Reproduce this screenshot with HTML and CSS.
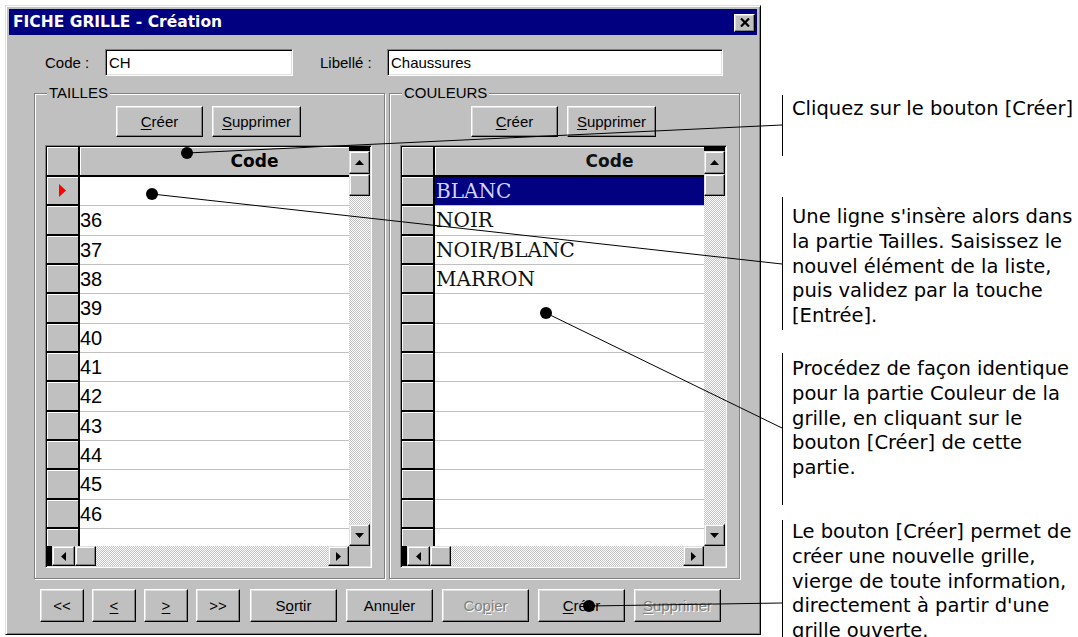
FILE: index.html
```html
<!DOCTYPE html>
<html lang="fr">
<head>
<meta charset="utf-8">
<title>Fiche grille - Création</title>
<link rel="stylesheet" href="styles.css">
</head>
<body>
<div class="page">
  <div class="window">
    <div class="titlebar">
      <span class="title">FICHE GRILLE - Création</span>
      <span class="close"><svg width="10" height="9" viewBox="0 0 10 9"><path d="M1 0.5L9 8.5M9 0.5L1 8.5" stroke="#000" stroke-width="2.2"/></svg></span>
    </div>
    <div class="content">
      <div class="fields">
        <span class="lbl lbl-code">Code :</span>
        <div class="field field-code">CH</div>
        <span class="lbl lbl-lib">Libellé :</span>
        <div class="field field-lib">Chaussures</div>
      </div>
      <div class="groups">
        <fieldset class="group">
          <legend>TAILLES</legend>
          <div class="group-btns">
            <div class="btn btn-a"><u>C</u>réer</div>
            <div class="btn btn-b"><u>S</u>upprimer</div>
          </div>
          <div class="grid">
            <div class="table sizes">
              <div class="row head"><div class="sel"></div><div class="cell">Code</div></div>
              <div class="row"><div class="sel"><svg width="7" height="13" viewBox="0 0 7 13"><polygon points="0,0 7,6.5 0,13" fill="#f00"/></svg></div><div class="cell"></div></div>
              <div class="row"><div class="sel"></div><div class="cell">36</div></div>
              <div class="row"><div class="sel"></div><div class="cell">37</div></div>
              <div class="row"><div class="sel"></div><div class="cell">38</div></div>
              <div class="row"><div class="sel"></div><div class="cell">39</div></div>
              <div class="row"><div class="sel"></div><div class="cell">40</div></div>
              <div class="row"><div class="sel"></div><div class="cell">41</div></div>
              <div class="row"><div class="sel"></div><div class="cell">42</div></div>
              <div class="row"><div class="sel"></div><div class="cell">43</div></div>
              <div class="row"><div class="sel"></div><div class="cell">44</div></div>
              <div class="row"><div class="sel"></div><div class="cell">45</div></div>
              <div class="row"><div class="sel"></div><div class="cell">46</div></div>
              <div class="row"><div class="sel"></div><div class="cell"></div></div>
            </div>
            <div class="vscroll">
              <div class="vbar-cap"></div>
              <div class="sb sb-up"><svg width="9" height="5" viewBox="0 0 9 5"><polygon points="0,5 4.5,0 9,5"/></svg></div>
              <div class="sb vthumb"></div>
              <div class="track"></div>
              <div class="sb sb-down"><svg width="9" height="5" viewBox="0 0 9 5"><polygon points="0,0 9,0 4.5,5"/></svg></div>
            </div>
            <div class="hscroll">
              <div class="hbar-cap"></div>
              <div class="sb sb-left"><svg width="5" height="9" viewBox="0 0 5 9"><polygon points="5,0 5,9 0,4.5"/></svg></div>
              <div class="sb hthumb"></div>
              <div class="track"></div>
              <div class="sb sb-right"><svg width="5" height="9" viewBox="0 0 5 9"><polygon points="0,0 5,4.5 0,9"/></svg></div>
            </div>
            <div class="corner"></div>
          </div>
        </fieldset>
        <fieldset class="group">
          <legend>COULEURS</legend>
          <div class="group-btns">
            <div class="btn btn-a"><u>C</u>réer</div>
            <div class="btn btn-b"><u>S</u>upprimer</div>
          </div>
          <div class="grid">
            <div class="table colors">
              <div class="row head"><div class="sel"></div><div class="cell">Code</div></div>
              <div class="row"><div class="sel"></div><div class="cell selected">BLANC</div></div>
              <div class="row"><div class="sel"></div><div class="cell">NOIR</div></div>
              <div class="row"><div class="sel"></div><div class="cell">NOIR/BLANC</div></div>
              <div class="row"><div class="sel"></div><div class="cell">MARRON</div></div>
              <div class="row"><div class="sel"></div><div class="cell"></div></div>
              <div class="row"><div class="sel"></div><div class="cell"></div></div>
              <div class="row"><div class="sel"></div><div class="cell"></div></div>
              <div class="row"><div class="sel"></div><div class="cell"></div></div>
              <div class="row"><div class="sel"></div><div class="cell"></div></div>
              <div class="row"><div class="sel"></div><div class="cell"></div></div>
              <div class="row"><div class="sel"></div><div class="cell"></div></div>
              <div class="row"><div class="sel"></div><div class="cell"></div></div>
              <div class="row"><div class="sel"></div><div class="cell"></div></div>
            </div>
            <div class="vscroll">
              <div class="vbar-cap"></div>
              <div class="sb sb-up"><svg width="9" height="5" viewBox="0 0 9 5"><polygon points="0,5 4.5,0 9,5"/></svg></div>
              <div class="sb vthumb"></div>
              <div class="track"></div>
              <div class="sb sb-down"><svg width="9" height="5" viewBox="0 0 9 5"><polygon points="0,0 9,0 4.5,5"/></svg></div>
            </div>
            <div class="hscroll">
              <div class="hbar-cap"></div>
              <div class="sb sb-left"><svg width="5" height="9" viewBox="0 0 5 9"><polygon points="5,0 5,9 0,4.5"/></svg></div>
              <div class="sb hthumb"></div>
              <div class="track"></div>
              <div class="sb sb-right"><svg width="5" height="9" viewBox="0 0 5 9"><polygon points="0,0 5,4.5 0,9"/></svg></div>
            </div>
            <div class="corner"></div>
          </div>
        </fieldset>
      </div>
      <div class="actions">
        <div class="btn btn-s">&lt;&lt;</div>
        <div class="btn btn-s"><u>&lt;</u></div>
        <div class="btn btn-s"><u>&gt;</u></div>
        <div class="btn btn-s">&gt;&gt;</div>
        <div class="btn btn-l btn-first">S<u>o</u>rtir</div>
        <div class="btn btn-l">Ann<u>u</u>ler</div>
        <div class="btn btn-l disabled">Co<u>p</u>ier</div>
        <div class="btn btn-l"><u>C</u>réer</div>
        <div class="btn btn-l disabled"><u>S</u>upprimer</div>
      </div>
    </div>
  </div>
  <div class="notes">
    <div class="note note-1">Cliquez sur le bouton [Créer]</div>
    <div class="note note-2">Une ligne s'insère alors dans<br>la partie Tailles. Saisissez le<br>nouvel élément de la liste,<br>puis validez par la touche<br>[Entrée].</div>
    <div class="note note-3">Procédez de façon identique<br>pour la partie Couleur de la<br>grille, en cliquant sur le<br>bouton [Créer] de cette<br>partie.</div>
    <div class="note note-4">Le bouton [Créer] permet de<br>créer une nouvelle grille,<br>vierge de toute information,<br>directement à partir d'une<br>grille ouverte.</div>
  </div>
</div>
<svg class="leaders" width="1078" height="637" viewBox="0 0 1078 637">
  <g stroke="#000" stroke-width="1" fill="none">
    <line x1="187" y1="153" x2="782" y2="125"/>
    <line x1="152" y1="194" x2="782" y2="264"/>
    <line x1="546" y1="313" x2="782" y2="428"/>
    <line x1="589" y1="606" x2="782" y2="603"/>
  </g>
  <g fill="#000">
    <circle cx="187" cy="153" r="6"/>
    <circle cx="152" cy="194" r="6"/>
    <circle cx="546" cy="313" r="6"/>
    <circle cx="589" cy="606" r="6"/>
  </g>
</svg>
</body>
</html>
```

FILE: styles.css
```css
* { box-sizing: border-box; }

html, body {
  margin: 0;
  padding: 0;
  background: #fff;
}

body {
  width: 1078px;
  height: 637px;
  overflow: hidden;
  position: relative;
  font-family: "Liberation Sans", Arial, sans-serif;
  font-size: 15px;
  color: #000;
}

.page {
  display: flex;
  align-items: flex-start;
}

/* ---------- window ---------- */
.window {
  margin: 5px 0 0 5px;
  width: 756px;
  height: 630px;
  flex: none;
  background: #c0c0c0;
  border: 1px solid;
  border-color: #dfdfdf #000 #000 #dfdfdf;
  box-shadow: inset 1px 1px #fff, inset -1px -1px #808080;
  padding: 3px;
  display: flex;
  flex-direction: column;
}

.titlebar {
  height: 26px;
  flex: none;
  background: #000080;
  display: flex;
  align-items: center;
  justify-content: space-between;
  padding: 0 2px 0 4px;
}

.title {
  color: #fff;
  font-family: "DejaVu Sans", Verdana, sans-serif;
  font-weight: bold;
  font-size: 15.5px;
  line-height: 26px;
  white-space: nowrap;
}

.close {
  width: 21px;
  height: 18px;
  margin-top: 1px;
  background: #c0c0c0;
  border: 1px solid;
  border-color: #fff #000 #000 #fff;
  box-shadow: inset -1px -1px #808080, inset 1px 1px #dfdfdf;
  display: flex;
  align-items: center;
  justify-content: center;
}

.content {
  display: flex;
  flex-direction: column;
}

/* ---------- code / libellé ---------- */
.fields {
  display: flex;
  align-items: center;
  height: 27px;
  margin-top: 14px;
  padding-left: 36px;
}

.lbl { white-space: nowrap; }
.lbl-code { width: 60px; }
.lbl-lib { width: 67px; margin-left: 27px; }

.field {
  height: 27px;
  background: #fff;
  border: 1px solid;
  border-color: #808080 #fff #fff #808080;
  box-shadow: inset 1px 1px #000, inset -1px -1px #dfdfdf;
  padding-left: 3px;
  line-height: 25px;
  white-space: nowrap;
}
.field-code { width: 188px; }
.field-lib { width: 336px; }

/* ---------- group boxes ---------- */
.groups {
  display: flex;
  gap: 4px;
  margin-top: 8px;
  padding-left: 25px;
}

.group {
  margin: 0;
  width: 351px;
  min-width: 0;
  padding: 4px 12px 10px 10px;
  border: 1px solid #808080;
  box-shadow: 1px 1px 0 #fff, inset 1px 1px 0 #fff;
}

.group legend {
  margin-left: 2px;
  padding: 0 2px;
  line-height: 18px;
  background: #c0c0c0;
}

.group-btns {
  display: flex;
  justify-content: center;
  gap: 9px;
  height: 31px;
}

/* ---------- buttons ---------- */
.btn {
  height: 31px;
  background: #c0c0c0;
  border: 1px solid;
  border-color: #fff #000 #000 #fff;
  box-shadow: inset -1px -1px #808080, inset 1px 1px #dfdfdf;
  display: flex;
  align-items: center;
  justify-content: center;
  white-space: nowrap;
}
.btn u { text-decoration-thickness: 1px; text-underline-offset: 2px; }
.btn-a { width: 87px; }
.btn-b { width: 89px; }

.btn.disabled {
  color: #808080;
  text-shadow: 1px 1px 0 #fff;
}

/* ---------- grids ---------- */
.grid {
  margin-top: 8px;
  width: 327px;
  height: 423px;
  border: 1px solid;
  border-color: #808080 #fff #fff #808080;
  box-shadow: inset 1px 1px #000, inset -1px -1px #dfdfdf;
  padding: 1px;
  display: grid;
  grid-template-columns: 1fr 21px;
  grid-template-rows: 1fr 20px;
}

.table {
  overflow: hidden;
  display: flex;
  flex-direction: column;
  min-height: 0;
}

.row {
  display: flex;
  flex: none;
  height: 29.333px;
}

.sel {
  width: 33px;
  flex: none;
  background: #c0c0c0;
  border-right: 2px solid #000;
  border-bottom: 2px solid #000;
  box-shadow: inset 1px 1px #fff;
  display: flex;
  align-items: center;
  justify-content: center;
  padding-right: 1px;
}

.cell {
  flex: 1;
  min-width: 0;
  background: #fff;
  border-bottom: 1px solid #c0c0c0;
  white-space: nowrap;
  line-height: 28px;
}

.row.head { height: 30px; }
.row.head .cell {
  background: #c0c0c0;
  border-bottom: 2px solid #000;
  box-shadow: inset 1px 1px #fff;
  font-family: "DejaVu Sans", Verdana, sans-serif;
  font-weight: bold;
  font-size: 17px;
  text-align: center;
  padding-left: 80px;
}

.sizes .cell {
  font-family: "Liberation Sans", Arial, sans-serif;
  font-size: 20px;
}

.colors .cell {
  font-family: "DejaVu Serif", "Liberation Serif", serif;
  font-size: 20px;
  padding-left: 1px;
  color: #111;
}

.cell.selected {
  background: #000080;
  color: #d4d4ff;
}

/* scrollbars */
.sb {
  flex: none;
  background: #c0c0c0;
  border: 1px solid;
  border-color: #dfdfdf #000 #000 #dfdfdf;
  box-shadow: inset -1px -1px #808080, inset 1px 1px #fff;
  display: flex;
  align-items: center;
  justify-content: center;
}

.track {
  flex: 1;
  background: repeating-conic-gradient(#c0c0c0 0 25%, #fff 0 50%) 0 0 / 2px 2px;
}

.vscroll {
  display: flex;
  flex-direction: column;
  min-height: 0;
}
.vbar-cap { height: 4px; flex: none; background: #000; }
.sb-up { height: 23px; }
.vthumb { height: 22px; }
.sb-down { height: 22px; }

.hscroll {
  display: flex;
  min-width: 0;
}
.hbar-cap { width: 5px; flex: none; background: #000; }
.sb-left { width: 23px; }
.hthumb { width: 21px; }
.sb-right { width: 21px; }

.corner { background: #c0c0c0; }

/* ---------- bottom actions ---------- */
.actions {
  display: flex;
  gap: 8px;
  margin-top: 10px;
  padding-left: 31px;
}
.actions .btn { height: 33px; }
.btn-s { width: 44px; }
.btn-l { width: 87px; margin-left: 1px; }
.btn-first { margin-left: 2px; }

/* ---------- annotations ---------- */
.notes {
  margin: 95px 0 0 21px;
  display: flex;
  flex-direction: column;
  font-family: "DejaVu Sans", Verdana, sans-serif;
  font-size: 19.5px;
  line-height: 24.75px;
  white-space: nowrap;
}

.note {
  border-left: 1px solid #000;
  padding-left: 9px;
  flex: none;
}
.note-1 { height: 61px; padding-top: 2px; }
.note-2 { height: 133px; margin-top: 41px; padding-top: 8px; }
.note-3 { height: 152px; margin-top: 23px; padding-top: 4px; }
.note-4 { height: 140px; margin-top: 15px; padding-top: 0; }

.leaders {
  position: absolute;
  left: 0;
  top: 0;
  pointer-events: none;
}
```
